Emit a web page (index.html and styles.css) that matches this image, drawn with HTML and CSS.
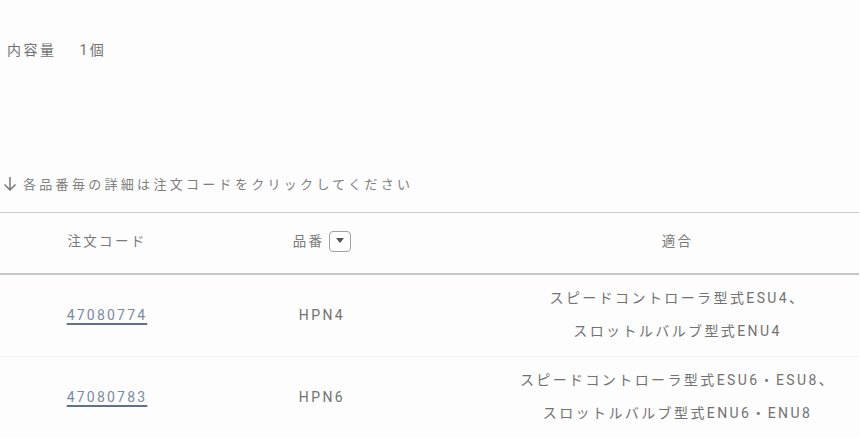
FILE: index.html
```html
<!DOCTYPE html>
<html lang="ja">
<head>
<meta charset="utf-8">
<link rel="stylesheet" href="styles.css">
</head>
<body>
<div class="page">
  <div class="volume"><span class="vol-label">内容量</span><span class="vol-value">1個</span></div>
  <div class="note">
    <svg class="note-arrow" width="16" height="17" viewBox="0 0 16 17"><path d="M8 2v13M2.5 9.5L8 15l5.5-5.5" fill="none" stroke="#777" stroke-width="1.5"/></svg>
    <span>各品番毎の詳細は注文コードをクリックしてください</span>
  </div>
  <div class="table">
    <div class="row head">
      <div class="cell c1">注文コード</div>
      <div class="cell c2">品番<span class="sort"><svg width="8" height="6" viewBox="0 0 8 6"><path d="M0 0h8L4 5z" fill="#555"/></svg></span></div>
      <div class="cell c3">適合</div>
    </div>
    <div class="row body">
      <div class="cell c1"><a class="code" href="#">47080774</a></div>
      <div class="cell c2">HPN4</div>
      <div class="cell c3">スピードコントローラ型式ESU4、<br>スロットルバルブ型式ENU4</div>
    </div>
    <div class="row body">
      <div class="cell c1"><a class="code" href="#">47080783</a></div>
      <div class="cell c2">HPN6</div>
      <div class="cell c3">スピードコントローラ型式ESU6・ESU8、<br>スロットルバルブ型式ENU6・ENU8</div>
    </div>
  </div>
</div>
</body>
</html>
```

FILE: styles.css
```css
html, body {
  margin: 0;
  padding: 0;
  background: #fdfdfd;
}
body {
  font-family: Roboto, "Noto Sans CJK JP", sans-serif;
  color: #727272;
  font-size: 14px;
}
.page {
  width: 859px;
}
.volume {
  margin-top: 40px;
  padding-left: 7px;
  height: 20px;
  line-height: 20px;
  font-size: 14px;
  letter-spacing: 2.5px;
  display: flex;
  gap: 23px;
}
.note {
  margin-top: 113px;
  height: 20px;
  padding-left: 2px;
  display: flex;
  align-items: center;
  gap: 5px;
  font-size: 13px;
  letter-spacing: 3.3px;
  color: #7e7e7e;
}
.note-arrow {
  flex: none;
}
.table {
  margin-top: 19px;
  border-top: 1px solid #c6c9cd;
}
.row {
  display: grid;
  grid-template-columns: 214px 216px 1fr;
}
.row.head {
  height: 60px;
  border-bottom: 2px solid #c3c6ca;
}
.row.head .cell {
  padding-top: 17px;
  line-height: 22px;
  letter-spacing: 2.3px;
  font-size: 13.5px;
  color: #7a7a7a;
}
.row.body {
  border-bottom: 1px solid #f3f3f3;
}
.row.body .cell {
  padding: 7px 0 8px;
  line-height: 33px;
  letter-spacing: 2.4px;
  display: flex;
  align-items: center;
  justify-content: center;
  text-align: center;
  min-height: 66px;
}
.cell {
  text-align: center;
}
.c3 {
  padding-left: 66px;
}
.row.body .c3 {
  padding-left: 66px;
}
.sort {
  display: inline-flex;
  align-items: center;
  justify-content: center;
  width: 20px;
  height: 19px;
  border: 1.5px solid #a0a0a0;
  border-radius: 4px;
  margin-left: 5px;
  vertical-align: middle;
  position: relative;
  top: -1px;
}
.code {
  color: #7b8aa0;
  text-decoration: underline;
  text-decoration-color: #61718c;
  text-decoration-thickness: 2px;
  text-underline-offset: 3px;
  font-size: 14px;
  letter-spacing: 2.2px;
}
```
